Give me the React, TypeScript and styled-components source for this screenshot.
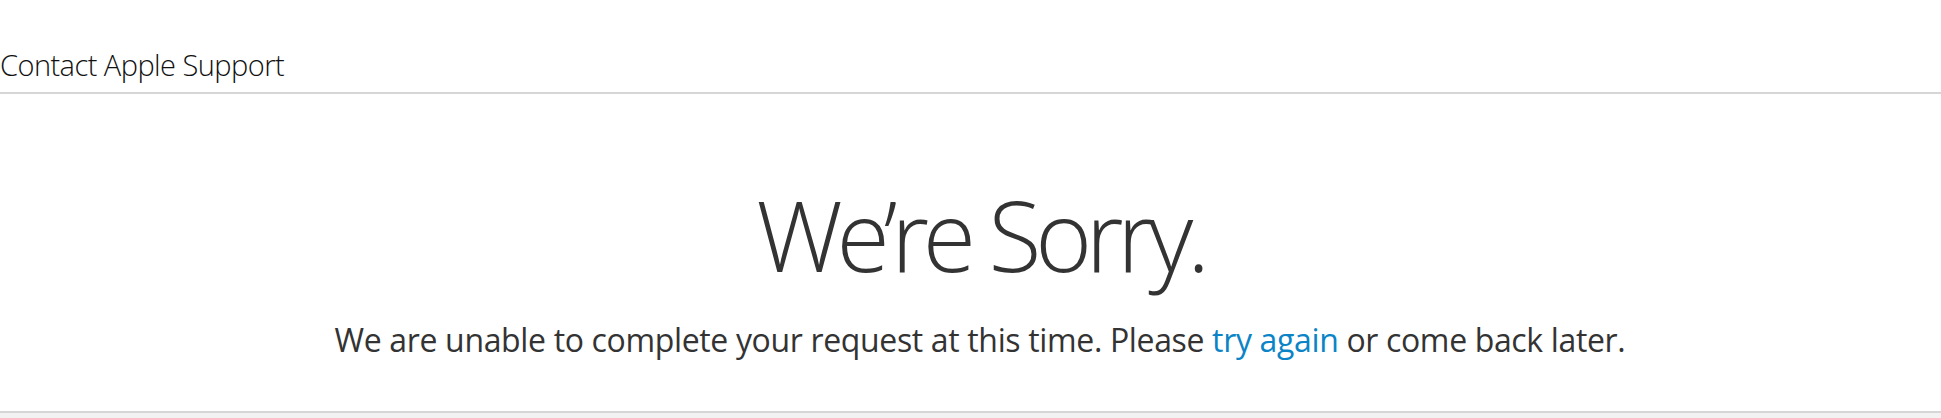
import styled, { createGlobalStyle } from 'styled-components';

const GlobalStyle = createGlobalStyle`
  html, body {
    margin: 0;
    padding: 0;
    background: #fff;
    font-family: "Open Sans", "Noto Sans", "Liberation Sans", sans-serif;
    color: #333;
  }
`;

const Page = styled.div`
  display: flex;
  flex-direction: column;
  min-height: 418px;
`;

const Header = styled.header`
  height: 94px;
  display: flex;
  align-items: flex-end;
  border-bottom: 2px solid #d6d6d6;
  box-sizing: border-box;
`;

const HeaderTitle = styled.h1`
  margin: 0 0 13px 0;
  font-size: 29px;
  line-height: 1;
  font-weight: 300;
  color: #111;
  letter-spacing: -0.55px;
`;

const Main = styled.main`
  display: flex;
  flex-direction: column;
  align-items: center;
  padding: 92px 0 0 19px;
  height: 317px;
  box-sizing: border-box;
`;

const Title = styled.h2`
  margin: 0;
  font-size: 97px;
  line-height: 1;
  font-weight: 300;
  color: #333;
  letter-spacing: -6.3px;
`;

const Message = styled.p`
  margin: 41px 0 0;
  font-size: 32px;
  line-height: 1;
  font-weight: 400;
  color: #333;
  letter-spacing: -0.35px;
`;

const Link = styled.a`
  color: #0a84c6;
  text-decoration: none;
`;

const Footer = styled.footer`
  flex: 1;
  border-top: 2px solid #d6d6d6;
  background: #f2f2f2;
`;

export default function App() {
  return (
    <>
      <GlobalStyle />
      <Page>
        <Header>
          <HeaderTitle>Contact Apple Support</HeaderTitle>
        </Header>
        <Main>
          <Title>We’re Sorry.</Title>
          <Message>
            We are unable to complete your request at this time. Please <Link href="#">try again</Link> or come back later.
          </Message>
        </Main>
        <Footer />
      </Page>
    </>
  );
}
